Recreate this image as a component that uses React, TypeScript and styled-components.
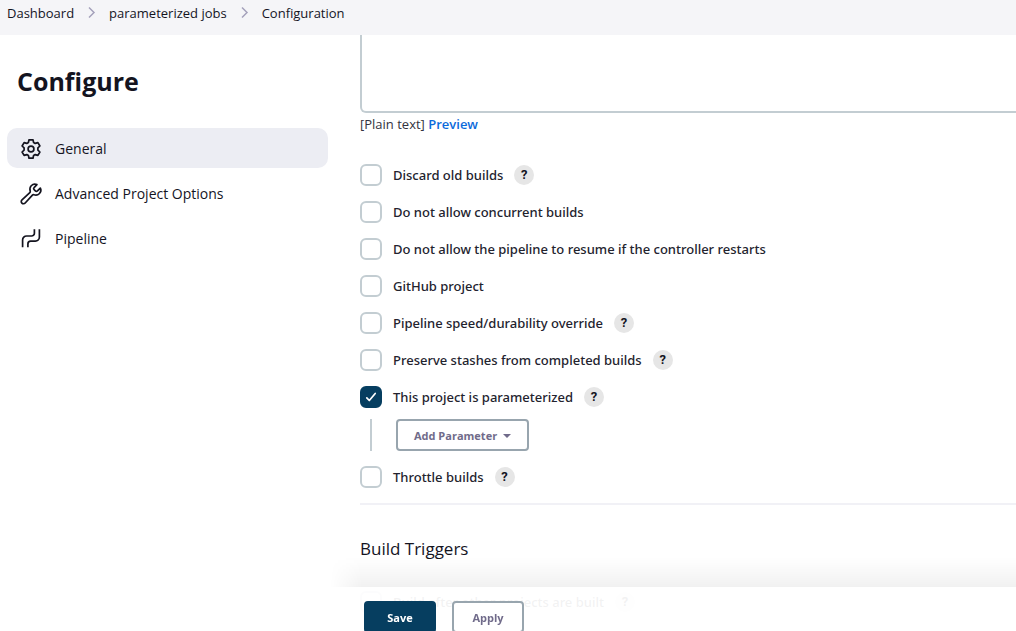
import React from "react";
import styled, { createGlobalStyle } from "styled-components";

const GlobalStyle = createGlobalStyle`
  *, *::before, *::after { box-sizing: border-box; }
  body {
    margin: 0;
    background: #fff;
    color: #14141f;
    font-family: "Open Sans", "Noto Sans", sans-serif;
    font-size: 13px;
    line-height: 20px;
  }
  button, input, textarea { font: inherit; color: inherit; }
`;

const Page = styled.div`
  display: flex;
  flex-direction: column;
  height: 100vh;
  overflow: hidden;
`;

const Breadcrumbs = styled.nav`
  flex: none;
  display: flex;
  align-items: flex-start;
  height: 35px;
  padding: 3px 7px;
  background: #f5f5f8;
`;

const CrumbList = styled.ol`
  display: flex;
  align-items: center;
  gap: 12px;
  margin: 0;
  padding: 0;
  list-style: none;
`;

const Crumb = styled.li`
  display: flex;
  align-items: center;
  gap: 12px;
`;

const CrumbLink = styled.a`
  color: inherit;
  text-decoration: none;
`;

const Layout = styled.div`
  flex: 1;
  display: grid;
  grid-template-columns: 360px minmax(0, 1fr);
  min-height: 0;
`;

const Sidebar = styled.aside`
  padding: 30px 32px 0 7px;
`;

const Title = styled.h1`
  margin: 0 0 31px;
  padding: 0 10px;
  font-size: 25px;
  font-weight: 700;
  line-height: 32px;
`;

const Tasks = styled.nav`
  display: flex;
  flex-direction: column;
  gap: 5px;
`;

const TaskLink = styled.a<{ $active?: boolean }>`
  display: flex;
  align-items: center;
  gap: 12px;
  height: 40px;
  padding: 1px 12px 0;
  border-radius: 10px;
  background: ${(p) => (p.$active ? "#ecedf3" : "transparent")};
  color: inherit;
  font-size: 14px;
  font-weight: 500;
  text-decoration: none;

  svg {
    flex: none;
    width: 24px;
    height: 24px;
  }
`;

const Main = styled.main`
  display: flex;
  flex-direction: column;
  margin-right: -24px;
`;

const Description = styled.textarea`
  display: block;
  width: 100%;
  height: 78px;
  padding: 8px;
  border: 2px solid #c3cdd2;
  border-top: 0;
  border-radius: 0 0 6px 6px;
  background: #fff;
  outline: none;
  resize: none;
`;

const FormatHint = styled.div`
  margin: 1px 0 30px;
  color: #333340;
`;

const PreviewLink = styled.a`
  color: #0b6adb;
  font-weight: 600;
  text-decoration: none;
`;

const Options = styled.div`
  display: flex;
  flex-direction: column;
  gap: 15px;
`;

const OptionRow = styled.div`
  display: flex;
  align-items: center;
  gap: 11px;
  height: 22px;
`;

const OptionLabel = styled.label`
  display: flex;
  align-items: center;
  gap: 11px;
  color: #23232e;
  font-family: "Noto Sans", sans-serif;
  font-weight: 500;
`;

const CheckWrap = styled.span`
  position: relative;
  display: flex;

  svg {
    position: absolute;
    inset: 0;
    pointer-events: none;
  }
`;

const Checkbox = styled.input`
  appearance: none;
  width: 22px;
  height: 22px;
  margin: 0;
  border: 2px solid #c3cdd2;
  border-radius: 6px;
  background: #fff;

  &:checked {
    border-color: #063e60;
    background: #063e60;
  }

  &:not(:checked) + svg {
    display: none;
  }
`;

const HelpButton = styled.button`
  display: grid;
  place-items: center;
  width: 20px;
  height: 20px;
  padding: 0;
  border: 0;
  border-radius: 50%;
  background: #e6e6e6;
  font-family: Roboto, sans-serif;
  font-weight: 700;
`;

const Nested = styled.div`
  display: flex;
  margin: -4px 0 0 10px;
  padding-left: 24px;
  border-left: 2px solid #c3cdd2;
`;

const Button = styled.button<{ $primary?: boolean }>`
  display: flex;
  align-items: center;
  justify-content: center;
  gap: 6px;
  height: 32px;
  min-width: 72px;
  padding: 1px 16px 0;
  border: 2px solid ${(p) => (p.$primary ? "#063e60" : "#98a5ae")};
  border-radius: 4px;
  background: ${(p) => (p.$primary ? "#063e60" : "#fff")};
  color: ${(p) => (p.$primary ? "#fff" : "#706b8a")};
  font-size: 11px;
  font-weight: 700;
`;

const Divider = styled.hr`
  width: 100%;
  height: 2px;
  margin: 15px 0 32px;
  border: 0;
  background: #f1f1f6;
`;

const SectionTitle = styled.h2`
  margin: 0 0 30px;
  font-size: 17px;
  font-weight: 500;
  line-height: 24px;
`;

const BottomBar = styled.div`
  position: fixed;
  right: 0;
  bottom: 0;
  left: 330px;
  display: flex;
  gap: 16px;
  height: 44px;
  padding: 14px 34px 0;
  background: rgba(255, 255, 255, 0.94);

  &::before {
    content: "";
    position: absolute;
    right: 0;
    bottom: 100%;
    left: 0;
    height: 30px;
    background: linear-gradient(to top, rgba(0, 0, 0, 0.055), rgba(0, 0, 0, 0.03) 40%, transparent);
    mask-image: linear-gradient(to right, transparent, #000 32px);
    pointer-events: none;
  }
`;

function Chevron() {
  return (
    <svg width="11" height="14" viewBox="0 0 11 14" fill="none" stroke="#a5a2bb" strokeWidth="1.5" aria-hidden="true">
      <path d="M3 1.5 8 6.5 3 11.5" />
    </svg>
  );
}

function GearIcon() {
  return (
    <svg viewBox="0 0 24 24" fill="none" stroke="currentColor" strokeWidth="1.7" strokeLinejoin="round" aria-hidden="true">
      <path d="M10 2.8h4l.6 2.7 1.6.9 2.7-.8 2 3.4-2 1.9v2.2l2 1.9-2 3.4-2.7-.8-1.6.9-.6 2.7h-4l-.6-2.7-1.6-.9-2.7.8-2-3.4 2-1.9v-2.2l-2-1.9 2-3.4 2.7.8 1.6-.9z" />
      <circle cx="12" cy="12" r="2.9" />
    </svg>
  );
}

function WrenchIcon() {
  return (
    <svg viewBox="0 0 512 512" fill="none" stroke="currentColor" strokeWidth="36" strokeLinecap="round" strokeLinejoin="round" aria-hidden="true">
      <path d="M393.87 190a32.1 32.1 0 0 1-45.25 0l-26.57-26.57a32.09 32.09 0 0 1 0-45.26L382.19 58a1 1 0 0 0-.3-1.64c-38.82-16.64-89.15-8.16-121.11 23.57-30.58 30.35-32.32 76-21.12 115.84a31.93 31.93 0 0 1-9.06 32.08L64 380a48.17 48.17 0 1 0 68 68l153.86-167a31.93 31.93 0 0 1 31.6-9.13c39.54 10.59 84.54 8.6 114.72-21.19 32.49-32 39.5-88.56 23.75-120.93a1 1 0 0 0-1.6-.26z" />
    </svg>
  );
}

function PipelineIcon() {
  return (
    <svg viewBox="0 0 24 24" fill="none" stroke="currentColor" strokeWidth="1.7" aria-hidden="true">
      <path d="M3.6 20.2v-7.2a4 4 0 0 1 4-4h5a2.8 2.8 0 0 0 2.8-2.8V2.2" />
      <path d="M8.9 20.2v-3.3a2.8 2.8 0 0 1 2.8-2.8h4.7a4 4 0 0 0 4-4V2.2" />
    </svg>
  );
}

interface OptionProps {
  label: string;
  help?: boolean;
  checked?: boolean;
}

function Option({ label, help, checked }: OptionProps) {
  return (
    <OptionRow>
      <OptionLabel>
        <CheckWrap>
          <Checkbox type="checkbox" defaultChecked={checked} />
          <svg width="22" height="22" viewBox="0 0 22 22" fill="none" stroke="#fff" strokeWidth="1.7" strokeLinecap="round" strokeLinejoin="round" aria-hidden="true">
            <path d="M6.8 11.8 9.3 14.5 15.2 7.5" />
          </svg>
        </CheckWrap>
        {label}
      </OptionLabel>
      {help && (
        <HelpButton type="button" aria-label={`Help for ${label}`}>
          ?
        </HelpButton>
      )}
    </OptionRow>
  );
}

export default function App() {
  return (
    <Page>
      <GlobalStyle />
      <Breadcrumbs aria-label="Breadcrumb">
        <CrumbList>
          <Crumb>
            <CrumbLink href="#dashboard">Dashboard</CrumbLink>
            <Chevron />
          </Crumb>
          <Crumb>
            <CrumbLink href="#job">parameterized jobs</CrumbLink>
            <Chevron />
          </Crumb>
          <Crumb>
            <CrumbLink href="#configuration">Configuration</CrumbLink>
          </Crumb>
        </CrumbList>
      </Breadcrumbs>
      <Layout>
        <Sidebar>
          <Title>Configure</Title>
          <Tasks aria-label="Sections">
            <TaskLink href="#general" $active>
              <GearIcon />
              General
            </TaskLink>
            <TaskLink href="#advanced">
              <WrenchIcon />
              Advanced Project Options
            </TaskLink>
            <TaskLink href="#pipeline">
              <PipelineIcon />
              Pipeline
            </TaskLink>
          </Tasks>
        </Sidebar>
        <Main>
          <Description aria-label="Description" />
          <FormatHint>
            [Plain text] <PreviewLink href="#preview">Preview</PreviewLink>
          </FormatHint>
          <Options>
            <Option label="Discard old builds" help />
            <Option label="Do not allow concurrent builds" />
            <Option label="Do not allow the pipeline to resume if the controller restarts" />
            <Option label="GitHub project" />
            <Option label="Pipeline speed/durability override" help />
            <Option label="Preserve stashes from completed builds" help />
            <Option label="This project is parameterized" help checked />
            <Nested>
              <Button type="button">
                Add Parameter
                <svg width="8" height="4" viewBox="0 0 8 4" fill="currentColor" aria-hidden="true">
                  <path d="M0 0h8L4 4z" />
                </svg>
              </Button>
            </Nested>
            <Option label="Throttle builds" help />
          </Options>
          <Divider />
          <SectionTitle>Build Triggers</SectionTitle>
          <Option label="Build after other projects are built" help />
        </Main>
      </Layout>
      <BottomBar>
        <Button type="submit" $primary>
          Save
        </Button>
        <Button type="button">Apply</Button>
      </BottomBar>
    </Page>
  );
}
